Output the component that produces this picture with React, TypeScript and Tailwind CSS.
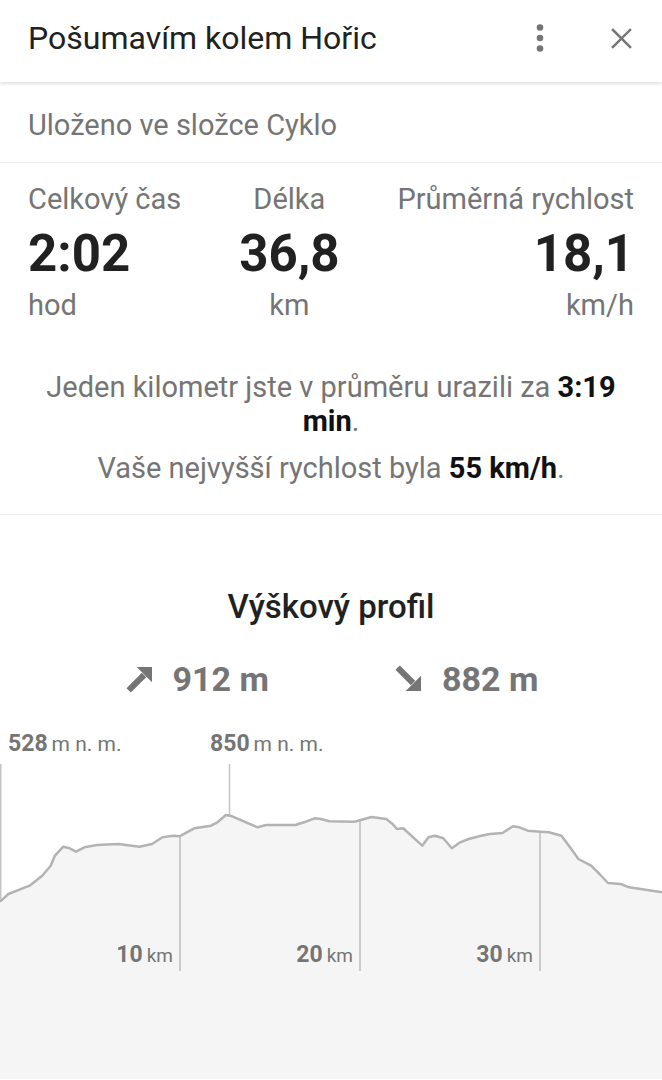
const FONT = "font-['Roboto','Liberation_Sans',sans-serif]";

// elevation curve, page coords (x, y) with chart top at y=720
const CHART_TOP = 720;
const PROFILE: [number, number][] = [
  [0, 902.7], [8.4, 895], [29.6, 886.7], [42.2, 876.7], [50.7, 866.7], [54.9, 856.7],
  [63.3, 847.7], [69.7, 849.3], [76, 852.7], [84.4, 848.3], [97.1, 846], [118.2, 845],
  [139.3, 847.7], [152, 845], [162.5, 838.3], [173.1, 836.7], [179.4, 837.3], [194.2, 829.3],
  [211.1, 826.7], [217.4, 823.3], [225.9, 816], [232.2, 817.3], [257.5, 828.3], [266, 826],
  [295.5, 826], [304, 823.3], [314.5, 819.3], [320.9, 820], [329.3, 822.3], [354.6, 822.7],
  [371.5, 818], [386.3, 820], [392.6, 825], [396.9, 830], [403.2, 829.3], [409.5, 835],
  [422.2, 846.7], [428.5, 838.3], [434.9, 836.7], [443.3, 839.3], [451.8, 849.3], [460.2, 843.3],
  [468.6, 840], [481.3, 836.7], [489.8, 835], [502.4, 834], [513, 827.3], [519.3, 828.3],
  [527.8, 831.7], [540.4, 832.7], [548.9, 833.3], [561.5, 836.7], [570, 848.3], [578.4, 860],
  [591.1, 866.7], [599.5, 875], [608, 884], [620.6, 885], [629.1, 888.3], [662, 893.3],
];

const pts = PROFILE.map(([x, y]) => [x, y - CHART_TOP] as [number, number]);
const linePath = pts.map(([x, y], i) => `${i === 0 ? "M" : "L"}${x} ${y}`).join(" ");
const fillPath = `${linePath} L662 360 L0 360 Z`;

function yAt(x: number) {
  for (let i = 1; i < pts.length; i++) {
    const [x0, y0] = pts[i - 1];
    const [x1, y1] = pts[i];
    if (x >= x0 && x <= x1) return y0 + ((y1 - y0) * (x - x0)) / (x1 - x0);
  }
  return 0;
}

const KM_MARKS = [
  { x: 180, label: "10" },
  { x: 360, label: "20" },
  { x: 540, label: "30" },
];

function ArrowUp() {
  return (
    <svg width="32" height="32" viewBox="0 0 24 24" className="fill-[#757575]">
      <polygon points="9.5,3 21,3 21,14.5" />
      <line x1="3.5" y1="20.5" x2="15" y2="9" stroke="#757575" strokeWidth="4.6" />
    </svg>
  );
}

function ArrowDown() {
  return (
    <svg width="32" height="32" viewBox="0 0 24 24" className="fill-[#757575]">
      <polygon points="9.5,21 21,21 21,9.5" />
      <line x1="3.5" y1="3.5" x2="15" y2="15" stroke="#757575" strokeWidth="4.6" />
    </svg>
  );
}

function Stat({ label, value, unit, align }: { label: string; value: string; unit: string; align: string }) {
  return (
    <div className={`flex flex-col ${align}`}>
      <span className="text-[29px] leading-[34px] text-[#757575]">{label}</span>
      <span className="text-[51px] leading-[60px] font-bold text-[#212121] mt-[8px]">{value}</span>
      <span className="text-[29px] leading-[34px] text-[#757575] mt-[4px]">{unit}</span>
    </div>
  );
}

function ElevLabel({ value }: { value: string }) {
  return (
    <>
      <span className="text-[23px] font-bold">{value}</span>
      <span className="text-[21px] ml-[4px]">m n. m.</span>
    </>
  );
}

export default function App() {
  return (
    <div className={`w-[662px] h-[1080px] bg-white overflow-hidden ${FONT}`}>
      {/* Header */}
      <div className="relative z-10 h-[82px] flex items-center justify-between pl-7 pr-[30px] bg-white shadow-[0_2px_3px_rgba(0,0,0,0.12)]">
        <h1 className="text-[32px] text-[#212121] -mt-[6px]">Pošumavím kolem Hořic</h1>
        <div className="flex items-center gap-[66px] -mt-[6px]">
          <svg width="10" height="28" viewBox="0 0 10 28" className="fill-[#757575]">
            <circle cx="5" cy="3.5" r="3.3" />
            <circle cx="5" cy="14" r="3.3" />
            <circle cx="5" cy="24.5" r="3.3" />
          </svg>
          <svg width="21" height="21" viewBox="0 0 22 22" stroke="#757575" strokeWidth="2.6" strokeLinecap="square">
            <line x1="2" y1="2" x2="20" y2="20" />
            <line x1="20" y1="2" x2="2" y2="20" />
          </svg>
        </div>
      </div>

      {/* Folder */}
      <div className="h-[81px] flex items-center pl-7 border-b border-[#ebebeb]">
        <span className="text-[29px] text-[#757575] mt-[7px]">Uloženo ve složce Cyklo</span>
      </div>

      {/* Stats */}
      <div className="flex justify-between px-7 pt-[19px]">
        <Stat label="Celkový čas" value="2:02" unit="hod" align="items-start" />
        <Stat label="Délka" value="36,8" unit="km" align="items-center" />
        <Stat label="Průměrná rychlost" value="18,1" unit="km/h" align="items-end" />
      </div>

      {/* Summary text */}
      <div className="flex flex-col items-center text-center text-[29px] leading-[34px] text-[#757575] pt-[48px] pb-[29px] border-b border-[#ebebeb]">
        <p>
          Jeden kilometr jste v průměru urazili za <b className="text-[#111]">3:19</b>
          <br />
          <b className="text-[#111]">min</b>.
        </p>
        <p className="mt-[13px]">
          Vaše nejvyšší rychlost byla <b className="text-[#111]">55 km/h</b>.
        </p>
      </div>

      {/* Elevation */}
      <div className="flex flex-col items-center pt-[70px]">
        <h2 className="text-[33px] leading-[44px] font-medium text-[#212121]">Výškový profil</h2>
        <div className="flex items-center mt-[30px] h-[40px] text-[34px] font-bold text-[#757575]">
          <div className="flex items-center gap-[17px]">
            <ArrowUp />
            <span>912 m</span>
          </div>
          <div className="flex items-center gap-[17px] ml-[124px]">
            <ArrowDown />
            <span>882 m</span>
          </div>
        </div>
      </div>

      {/* Chart */}
      <div className="relative mt-[20px] h-[360px]">
        <svg width="662" height="360" className="absolute inset-0">
          <path d={fillPath} fill="#f5f5f5" />
          <line x1="0.75" y1="45" x2="0.75" y2={yAt(0)} stroke="#c4c4c4" strokeWidth="1.5" />
          <line x1="229.5" y1="45" x2="229.5" y2={yAt(229.5)} stroke="#c4c4c4" strokeWidth="1.5" />
          {KM_MARKS.map((m) => (
            <line key={m.x} x1={m.x} y1={yAt(m.x)} x2={m.x} y2="252" stroke="#bdbdbd" strokeWidth="1.5" />
          ))}
          <path d={linePath} fill="none" stroke="#b3b3b3" strokeWidth="2.5" strokeLinejoin="round" />
        </svg>

        <div className="absolute left-[8px] top-[8px] leading-[34px] text-[#757575] whitespace-nowrap">
          <ElevLabel value="528" />
        </div>
        <div className="absolute left-[210px] top-[8px] leading-[34px] text-[#757575] whitespace-nowrap">
          <ElevLabel value="850" />
        </div>

        {KM_MARKS.map((m) => (
          <div
            key={m.label}
            className="absolute top-[219px] w-[120px] leading-[34px] text-right text-[#757575] whitespace-nowrap"
            style={{ left: m.x - 127 }}
          >
            <span className="text-[23px] font-bold">{m.label}</span>
            <span className="text-[19px] ml-[4px]">km</span>
          </div>
        ))}
      </div>
    </div>
  );
}
